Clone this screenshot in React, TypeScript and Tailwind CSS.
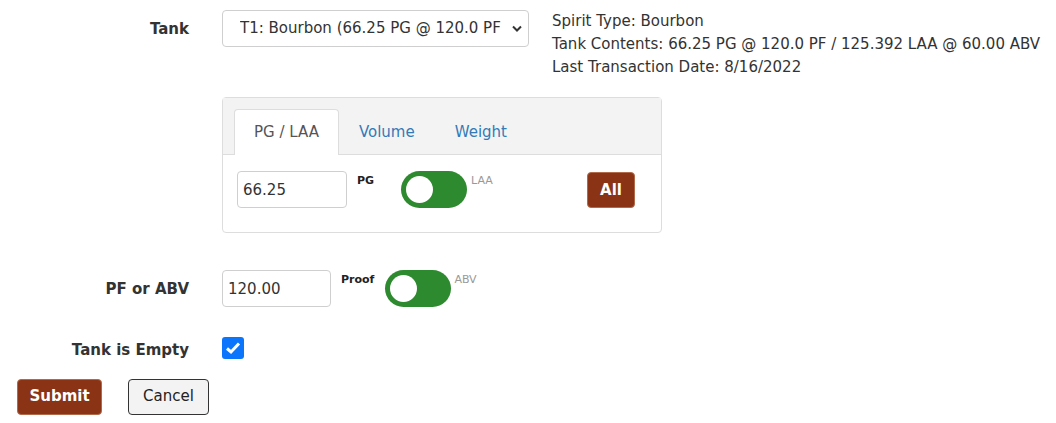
import { useState } from "react";

function Toggle({ on, onClick }: { on: boolean; onClick: () => void }) {
  return (
    <button
      type="button"
      onClick={onClick}
      className="relative h-[37px] w-[66px] shrink-0 rounded-full bg-[#2e8a2f]"
    >
      <span
        className={
          "absolute top-[5px] h-[27px] w-[27px] rounded-full bg-white " +
          (on ? "left-[34px]" : "left-[5px]")
        }
      />
    </button>
  );
}

export default function App() {
  const [laa, setLaa] = useState(false);
  const [abv, setAbv] = useState(false);
  const [empty, setEmpty] = useState(true);
  const [tab, setTab] = useState("PG / LAA");

  const labelClass = "w-[189px] shrink-0 text-right text-[15px] font-semibold text-[#333]";
  const inputClass =
    "h-[37px] rounded-[4px] border border-[#cfcfcf] bg-white px-[5px] text-[15px] text-[#333] outline-none";

  return (
    <div className="min-h-[423px] bg-white pt-[10px] font-['DejaVu_Sans',sans-serif] text-[#333]">
      {/* tank row */}
      <div className="flex">
        <div className={labelClass + " pt-[8px]"}>Tank</div>
        <div className="ml-[33px] flex-1">
          <div className="flex items-start">
            <div className="relative">
              <select className="h-[37px] w-[307px] appearance-none rounded-[4px] border border-[#cfcfcf] bg-white pl-[17px] pr-[20px] text-[15px] text-[#333] outline-none">
                <option>T1: Bourbon (66.25 PG @ 120.0 PF</option>
              </select>
              <svg
                className="pointer-events-none absolute right-[7px] top-[15px]"
                width="10"
                height="7"
                viewBox="0 0 10 7"
              >
                <path d="M1 1.5 L5 5.5 L9 1.5" fill="none" stroke="#333" strokeWidth="2" />
              </svg>
            </div>
            <div className="ml-[23px] text-[15px] leading-[23px] text-[#333]">
              <div>Spirit Type: Bourbon</div>
              <div>Tank Contents: 66.25 PG @ 120.0 PF / 125.392 LAA @ 60.00 ABV</div>
              <div>Last Transaction Date: 8/16/2022</div>
            </div>
          </div>

          {/* quantity card */}
          <div className="mt-[18px] w-[440px] rounded-[4px] border border-[#dddddd]">
            <div className="flex border-b border-[#dddddd] bg-[#f3f3f3] pl-[11px] pt-[11px]">
              {["PG / LAA", "Volume", "Weight"].map((t) => (
                <button
                  key={t}
                  type="button"
                  onClick={() => setTab(t)}
                  className={
                    "-mb-px h-[46px] px-[19px] text-[15px] " +
                    (tab === t
                      ? "rounded-t-[4px] border border-b-0 border-[#dddddd] bg-white text-[#555]"
                      : "border border-transparent text-[#337ab7]")
                  }
                >
                  {t}
                </button>
              ))}
            </div>
            <div className="flex items-start px-[14px] pb-[17px] pt-[16px]">
              <input className={inputClass + " w-[110px]"} defaultValue="66.25" />
              <span className="ml-[10px] mt-[2px] text-[11px] font-bold text-[#222]">PG</span>
              <div className="ml-[27px]">
                <Toggle on={laa} onClick={() => setLaa(!laa)} />
              </div>
              <span className="ml-[4px] mt-[2px] text-[11px] text-[#999]">LAA</span>
              <button
                type="button"
                className="ml-auto mr-[12px] mt-[1px] h-[36px] rounded-[4px] border border-[#b06a4a] bg-[#8a3315] px-[12px] text-[15px] font-semibold text-white"
              >
                All
              </button>
            </div>
          </div>
        </div>
      </div>

      {/* pf or abv row */}
      <div className="mt-[37px] flex items-start">
        <div className={labelClass + " pt-[8px]"}>PF or ABV</div>
        <div className="ml-[33px] flex items-start">
          <input className={inputClass + " w-[109px]"} defaultValue="120.00" />
          <span className="ml-[10px] mt-[2px] text-[11px] font-bold text-[#222]">Proof</span>
          <div className="ml-[11px]">
            <Toggle on={abv} onClick={() => setAbv(!abv)} />
          </div>
          <span className="ml-[3px] mt-[2px] text-[11px] text-[#999]">ABV</span>
        </div>
      </div>

      {/* tank empty row */}
      <div className="mt-[18px] flex items-start">
        <div className={labelClass + " pt-[7px]"}>Tank is Empty</div>
        <div className="ml-[33px] pt-[5px]">
          <button
            type="button"
            onClick={() => setEmpty(!empty)}
            className={
              "flex h-[22px] w-[22px] items-center justify-center rounded-[3px] " +
              (empty ? "bg-[#0b76fb]" : "border-2 border-[#767676] bg-white")
            }
          >
            {empty ? (
              <svg width="16" height="14" viewBox="0 0 16 14">
                <path d="M2 7.5 L6 11 L14 2.5" fill="none" stroke="white" strokeWidth="3" />
              </svg>
            ) : null}
          </button>
        </div>
      </div>

      {/* actions */}
      <div className="ml-[17px] mt-[17px] flex items-center gap-[26px]">
        <button
          type="button"
          className="h-[36px] w-[85px] rounded-[4px] border border-[#b06a4a] bg-[#8a3315] text-[15px] font-semibold text-white"
        >
          Submit
        </button>
        <button
          type="button"
          className="h-[36px] w-[81px] rounded-[4px] border border-[#333] bg-[#f3f3f3] text-[15px] text-[#222]"
        >
          Cancel
        </button>
      </div>
    </div>
  );
}
